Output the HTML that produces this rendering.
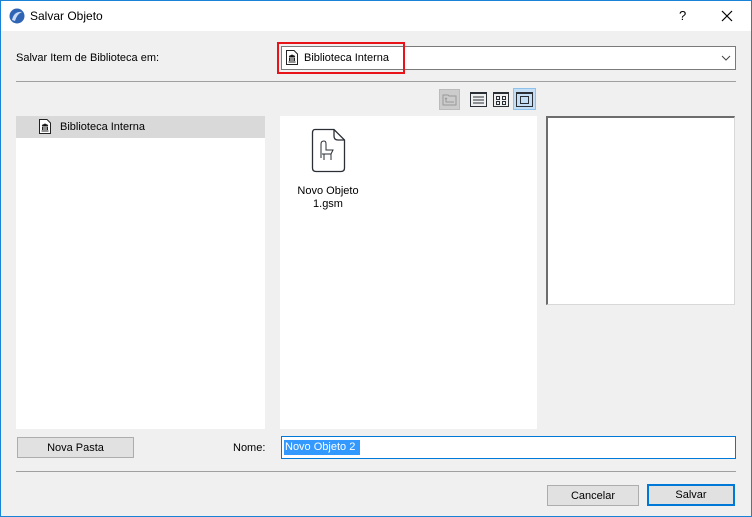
<!DOCTYPE html>
<html><head><style>
*{margin:0;padding:0;box-sizing:border-box}
body{width:752px;height:517px;background:#f0f0f0;font-family:"Liberation Sans",sans-serif;font-size:11px;color:#000;position:relative;overflow:hidden}
.a{position:absolute}
.win{left:0;top:0;width:752px;height:517px;border:1px solid #1883d7;border-top:none}
.title{left:0;top:0;width:752px;height:31px;background:#fff;border:1px solid #1883d7;border-bottom:none}
.btn{background:#e1e1e1;border:1px solid #adadad;text-align:center;line-height:20px}
</style></head><body>
<div class="a win"></div>
<div class="a title"></div>
<svg class="a" style="left:9px;top:8px" width="16" height="16" viewBox="0 0 16 16"><circle cx="8" cy="8" r="7.5" fill="#2f64b5"/><path d="M3 12 Q5 3 13 4 Q8 6 6 13Z" fill="#c8daf4"/></svg>
<div class="a" style="left:30px;top:9px;font-size:12px;color:#000">Salvar Objeto</div>
<div class="a" style="left:679px;top:8px;font-size:13px">?</div>
<svg class="a" style="left:721px;top:10px" width="12" height="12"><path d="M1 1L11 11M11 1L1 11" stroke="#000" stroke-width="1.2"/></svg>
<div class="a" style="left:16px;top:52px">Salvar Item de Biblioteca em:</div>
<div class="a" style="left:281px;top:46px;width:455px;height:24px;background:#fff;border:1px solid #7a7a7a"></div>
<div class="a" style="left:277px;top:42px;width:128px;height:32px;border:2px solid #e8141a"></div>
<svg class="a" style="left:286px;top:50px" width="12" height="15" viewBox="0 0 12 15"><path d="M0.5 0.5H8L11.5 4V14.5H0.5Z" fill="#fff" stroke="#222"/><path d="M3 6.5L6 5L9 6.5M3 7H9M3.5 8V11M5 8V11M7 8V11M8.5 8V11M2.5 12H9.5" stroke="#222" stroke-width="1"/></svg>
<div class="a" style="left:304px;top:52px">Biblioteca Interna</div>
<svg class="a" style="left:721px;top:55px" width="10" height="6"><path d="M1 1L5 5L9 1" stroke="#444" fill="none"/></svg>
<div class="a" style="left:16px;top:81px;width:720px;height:1px;background:#a0a0a0"></div>
<div class="a" style="left:439px;top:89px;width:21px;height:21px;background:#ccc;border:1px solid #bbb"></div>
<svg class="a" style="left:442px;top:93px" width="15" height="13"><path d="M1 2H6L7 3H14V12H1Z" fill="none" stroke="#999"/><path d="M4 5V9H12M3 6L4 5L5 6" stroke="#999" fill="none"/></svg>
<svg class="a" style="left:470px;top:92px" width="17" height="15"><rect x="0.5" y="0.5" width="16" height="14" fill="none" stroke="#2a2f36"/><rect x="0" y="0" width="17" height="2" fill="#2a2f36"/><path d="M3 5H14M3 8H14M3 11H14" stroke="#2a2f36"/></svg>
<svg class="a" style="left:493px;top:92px" width="16" height="15"><rect x="0.5" y="0.5" width="15" height="14" fill="none" stroke="#2a2f36"/><rect x="0" y="0" width="16" height="2" fill="#2a2f36"/><rect x="3.5" y="4.5" width="3" height="3" fill="none" stroke="#2a2f36"/><rect x="9.5" y="4.5" width="3" height="3" fill="none" stroke="#2a2f36"/><rect x="3.5" y="9.5" width="3" height="3" fill="none" stroke="#2a2f36"/><rect x="9.5" y="9.5" width="3" height="3" fill="none" stroke="#2a2f36"/></svg>
<div class="a" style="left:513px;top:88px;width:23px;height:22px;background:#c4dff5;border:1px solid #8cc2ec"></div>
<svg class="a" style="left:516px;top:92px" width="17" height="15"><rect x="0.5" y="0.5" width="16" height="14" fill="none" stroke="#2a2f36"/><rect x="0" y="0" width="17" height="2" fill="#2a2f36"/><rect x="4.5" y="4.5" width="8" height="7" fill="none" stroke="#2a2f36"/></svg>
<div class="a" style="left:16px;top:116px;width:249px;height:313px;background:#fff"></div>
<div class="a" style="left:16px;top:116px;width:249px;height:22px;background:#d9d9d9"></div>
<svg class="a" style="left:39px;top:119px" width="12" height="15" viewBox="0 0 12 15"><path d="M0.5 0.5H8L11.5 4V14.5H0.5Z" fill="#fff" stroke="#222"/><path d="M3 6.5L6 5L9 6.5M3 7H9M3.5 8V11M5 8V11M7 8V11M8.5 8V11M2.5 12H9.5" stroke="#222"/></svg>
<div class="a" style="left:60px;top:121px">Biblioteca Interna</div>
<div class="a" style="left:280px;top:116px;width:257px;height:313px;background:#fff"></div>
<svg class="a" style="left:311px;top:128px" width="35" height="45" viewBox="0 0 35 45"><path d="M4 1.5H23L33.5 12V40Q33.5 43.5 30 43.5H5Q1.5 43.5 1.5 40V5Q1.5 1.5 4 1.5Z" fill="#fff" stroke="#2a2f36" stroke-width="1.3"/><path d="M23 1.5V8Q23 12 27 12H33.5" fill="none" stroke="#2a2f36" stroke-width="1.3"/><path d="M10 30V16Q10 13 13 13Q15 13 15 16V22H22L20 26H11M13 26V32M20 26V32" fill="none" stroke="#2a2f36" stroke-width="1"/></svg>
<div class="a" style="left:280px;top:185px;width:96px;text-align:center;line-height:13px">Novo Objeto<br>1.gsm</div>
<div class="a" style="left:546px;top:116px;width:189px;height:189px;background:#fff;border-top:2px solid #6d6d6d;border-left:2px solid #6d6d6d;border-right:1px solid #d8d8d8;border-bottom:1px solid #d8d8d8"></div>
<div class="a btn" style="left:17px;top:437px;width:117px;height:21px">Nova Pasta</div>
<div class="a" style="left:233px;top:442px">Nome:</div>
<div class="a" style="left:281px;top:436px;width:455px;height:23px;background:#fff;border:1px solid #0078d7"></div>
<div class="a" style="left:284px;top:440px;height:15px;width:76px;background:#3399ff;color:#fff;line-height:15px;padding-left:1px">Novo Objeto 2</div>
<div class="a" style="left:16px;top:471px;width:720px;height:1px;background:#a0a0a0"></div>
<div class="a btn" style="left:547px;top:485px;width:92px;height:21px">Cancelar</div>
<div class="a btn" style="left:647px;top:484px;width:88px;height:22px;border:2px solid #0078d7;line-height:19px">Salvar</div>
</body></html>
